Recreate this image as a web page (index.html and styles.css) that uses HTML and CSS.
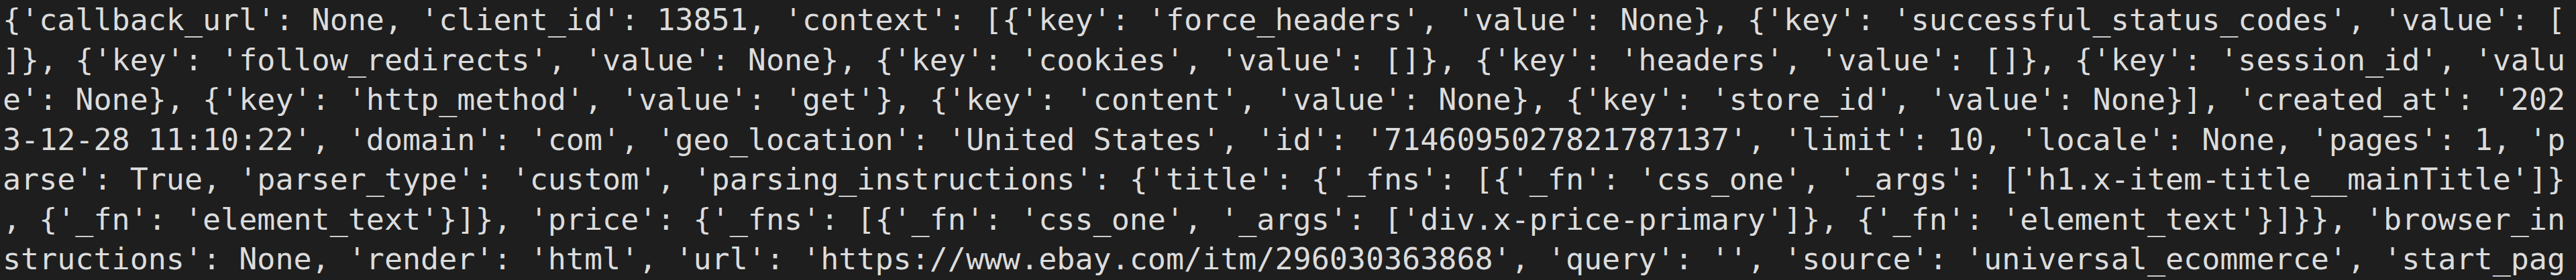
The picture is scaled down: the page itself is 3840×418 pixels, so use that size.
FILE: index.html
```html
<!DOCTYPE html>
<html lang="en">
<head>
<meta charset="utf-8">
<title>Terminal output</title>
<link rel="stylesheet" href="styles.css">
</head>
<body>
<main class="terminal">
<div class="line">{'callback_url': None, 'client_id': 13851, 'context': [{'key': 'force_headers', 'value': None}, {'key': 'successful_status_codes', 'value': [</div>
<div class="line">]}, {'key': 'follow_redirects', 'value': None}, {'key': 'cookies', 'value': []}, {'key': 'headers', 'value': []}, {'key': 'session_id', 'valu</div>
<div class="line">e': None}, {'key': 'http_method', 'value': 'get'}, {'key': 'content', 'value': None}, {'key': 'store_id', 'value': None}], 'created_at': '202</div>
<div class="line">3-12-28 11:10:22', 'domain': 'com', 'geo_location': 'United States', 'id': '7146095027821787137', 'limit': 10, 'locale': None, 'pages': 1, 'p</div>
<div class="line">arse': True, 'parser_type': 'custom', 'parsing_instructions': {'title': {'_fns': [{'_fn': 'css_one', '_args': ['h1.x-item-title__mainTitle']}</div>
<div class="line">, {'_fn': 'element_text'}]}, 'price': {'_fns': [{'_fn': 'css_one', '_args': ['div.x-price-primary']}, {'_fn': 'element_text'}]}}, 'browser_in</div>
<div class="line">structions': None, 'render': 'html', 'url': 'https://www.ebay.com/itm/296030363868', 'query': '', 'source': 'universal_ecommerce', 'start_pag</div>
</main>
</body>
</html>
```

FILE: styles.css
```css
html, body {
  margin: 0;
  padding: 0;
  background: #1e1e1e;
  height: 100%;
  overflow: hidden;
}

.terminal {
  display: flex;
  flex-direction: column;
  padding: 0 0 0 4px;
  font-family: "DejaVu Sans Mono", "Liberation Mono", monospace;
  font-size: 45px;
  line-height: 59.5px;
  color: #dcdcdc;
}

.line {
  white-space: pre;
}
```
